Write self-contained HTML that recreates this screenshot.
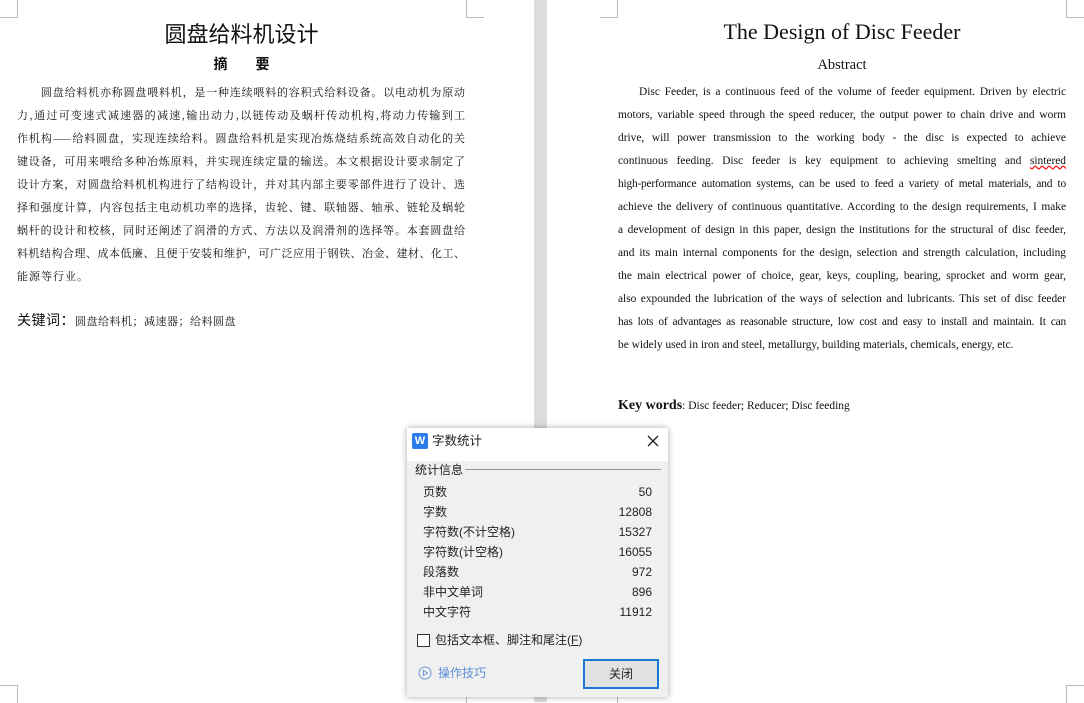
<!DOCTYPE html>
<html><head><meta charset="utf-8"><style>
body{margin:0;width:1084px;height:702px;background:#fff;position:relative;overflow:hidden;font-family:"Liberation Serif","Noto Serif CJK SC",serif;color:#111}
.gut{position:absolute;left:534px;top:0;width:13px;height:702px;background:#dcdcdc}
.m{position:absolute;border-color:#bbb;border-style:solid;border-width:0}
.l{position:absolute;height:23px;line-height:23px;text-align:justify;text-align-last:justify;white-space:nowrap;overflow:visible}
.cn .l{left:17px;width:448px;font-size:11px;font-family:"Noto Serif CJK SC","WenQuanYi Zen Hei",serif}
.en .l{left:618px;width:448px;font-size:11.4px;font-family:"Liberation Serif",serif}
.na{text-align-last:left!important}
.dlg{position:absolute;left:407px;top:428px;width:261px;height:269px;background:#f0f0f0;box-shadow:0 0 6px rgba(0,0,0,.35);font-family:"Liberation Sans","Noto Sans CJK SC",sans-serif;font-size:12px;color:#222}
.tb{height:33px;background:#fff;position:relative}
.row{position:absolute;left:16px;width:229px;height:20px;line-height:20px}
.row span{float:right}
</style></head><body>
<div class="gut"></div>
<div class="m" style="left:0;top:0;width:17px;height:17px;border-right-width:1px;border-bottom-width:1px"></div>
<div class="m" style="left:466px;top:0;width:17px;height:17px;border-left-width:1px;border-bottom-width:1px"></div>
<div class="m" style="left:0;top:685px;width:17px;height:17px;border-right-width:1px;border-top-width:1px"></div>
<div class="m" style="left:466px;top:685px;width:17px;height:17px;border-left-width:1px;border-top-width:1px"></div>
<div class="m" style="left:600px;top:0;width:17px;height:17px;border-right-width:1px;border-bottom-width:1px"></div>
<div class="m" style="left:1066px;top:0;width:17px;height:17px;border-left-width:1px;border-bottom-width:1px"></div>
<div class="m" style="left:600px;top:685px;width:17px;height:17px;border-right-width:1px;border-top-width:1px"></div>
<div class="m" style="left:1066px;top:685px;width:17px;height:17px;border-left-width:1px;border-top-width:1px"></div>

<div style="position:absolute;left:0;width:483px;top:18px;text-align:center;font:22px 'Noto Sans CJK SC',sans-serif;line-height:30px">圆盘给料机设计</div>
<div style="position:absolute;left:0;width:483px;top:54px;text-align:center;font:bold 14px 'Noto Sans CJK SC',sans-serif;line-height:20px">摘&emsp;&emsp;要</div>
<div class="cn">
<div class="l" style="top:81px;padding-left:24px;width:424px">圆盘给料机亦称圆盘喂料机，是一种连续喂料的容积式给料设备。以电动机为原动</div>
<div class="l" style="top:104px">力,通过可变速式减速器的减速,输出动力,以链传动及蜗杆传动机构,将动力传输到工</div>
<div class="l" style="top:127px">作机构——给料圆盘，实现连续给料。圆盘给料机是实现冶炼烧结系统高效自动化的关</div>
<div class="l" style="top:150px">键设备，可用来喂给多种冶炼原料，并实现连续定量的输送。本文根据设计要求制定了</div>
<div class="l" style="top:173px">设计方案，对圆盘给料机机构进行了结构设计，并对其内部主要零部件进行了设计、选</div>
<div class="l" style="top:196px">择和强度计算，内容包括主电动机功率的选择，齿轮、键、联轴器、轴承、链轮及蜗轮</div>
<div class="l" style="top:219px">蜗杆的设计和校核，同时还阐述了润滑的方式、方法以及润滑剂的选择等。本套圆盘给</div>
<div class="l" style="top:242px">料机结构合理、成本低廉、且便于安装和维护，可广泛应用于钢铁、冶金、建材、化工、</div>
<div class="l na" style="top:265px;letter-spacing:1px">能源等行业。</div>
</div>
<div style="position:absolute;left:17px;top:310px;line-height:22px;font-family:'Noto Serif CJK SC',serif;font-size:11px;letter-spacing:0.5px"><span style="font:14px 'Noto Sans CJK SC',sans-serif">关键词：</span>圆盘给料机；减速器；给料圆盘</div>

<div style="position:absolute;left:600px;width:484px;top:17px;text-align:center;font-size:22px;line-height:30px">The Design of Disc Feeder</div>
<div style="position:absolute;left:600px;width:484px;top:55px;text-align:center;font-size:14.5px;line-height:20px">Abstract</div>
<div class="en">
<div class="l" style="top:81px;padding-left:21px;width:427px">Disc Feeder, is a continuous feed of the volume of feeder equipment. Driven by electric</div>
<div class="l" style="top:104px">motors, variable speed through the speed reducer, the output power to chain drive and worm</div>
<div class="l" style="top:127px">drive, will power transmission to the working body - the disc is expected to achieve</div>
<div class="l" style="top:150px">continuous feeding. Disc feeder is key equipment to achieving smelting and <span style="text-decoration:underline wavy red">sintered</span></div>
<div class="l" style="top:173px;letter-spacing:-0.2px">high-performance automation systems, can be used to feed a variety of metal materials, and to</div>
<div class="l" style="top:196px">achieve the delivery of continuous quantitative.  According to the design requirements, I make</div>
<div class="l" style="top:219px">a development of design in this paper, design the institutions for the structural of disc feeder,</div>
<div class="l" style="top:242px">and its main internal components for the design, selection and strength calculation, including</div>
<div class="l" style="top:265px">the main electrical power of choice, gear, keys, coupling, bearing, sprocket and worm gear,</div>
<div class="l" style="top:288px">also expounded the lubrication of the ways of selection and lubricants. This set of disc feeder</div>
<div class="l" style="top:311px;letter-spacing:-0.2px">has lots of advantages as reasonable structure, low cost and easy to install and maintain. It can</div>
<div class="l na" style="top:334px">be widely used in iron and steel, metallurgy, building materials, chemicals, energy, etc.</div>
</div>
<div style="position:absolute;left:618px;top:395px;font-size:11.5px;line-height:22px"><b style="font-size:14px">Key words</b>: Disc feeder; Reducer; Disc feeding</div>

<div class="dlg">
<div class="tb">
<div style="position:absolute;left:5px;top:5px;width:16px;height:16px;background:#2b7ce9;border-radius:2px;color:#fff;font:bold 11px 'Liberation Sans',sans-serif;text-align:center;line-height:16px">W</div>
<div style="position:absolute;left:25px;top:4px;line-height:18px;font-size:12.5px">字数统计</div>
<svg style="position:absolute;left:240px;top:7px" width="12" height="12"><path d="M1 1L11 11M11 1L1 11" stroke="#222" stroke-width="1.3"/></svg>
</div>
<div style="position:absolute;left:8px;top:33px;line-height:18px">统计信息</div>
<div style="position:absolute;left:58px;top:41px;width:196px;border-top:1px solid #999"></div>
<div class="row" style="top:54px">页数<span>50</span></div>
<div class="row" style="top:74px">字数<span>12808</span></div>
<div class="row" style="top:94px">字符数(不计空格)<span>15327</span></div>
<div class="row" style="top:114px">字符数(计空格)<span>16055</span></div>
<div class="row" style="top:134px">段落数<span>972</span></div>
<div class="row" style="top:154px">非中文单词<span>896</span></div>
<div class="row" style="top:174px">中文字符<span>11912</span></div>
<div style="position:absolute;left:10px;top:206px;width:11px;height:11px;border:1px solid #333;background:#fff"></div>
<div style="position:absolute;left:28px;top:203px;line-height:18px">包括文本框、脚注和尾注(<u>F</u>)</div>
<svg style="position:absolute;left:11px;top:238px" width="14" height="14"><circle cx="7" cy="7" r="6" fill="none" stroke="#6a9ad8"/><path d="M5.5 4.5L9.5 7L5.5 9.5Z" fill="none" stroke="#6a9ad8"/></svg>
<div style="position:absolute;left:31px;top:236px;line-height:18px;color:#5b8fd6">操作技巧</div>
<div style="position:absolute;left:176px;top:231px;width:72px;height:26px;border:2px solid #1a7ad6;background:#e1e1e1;text-align:center;line-height:26px">关闭</div>
</div>
</body></html>
